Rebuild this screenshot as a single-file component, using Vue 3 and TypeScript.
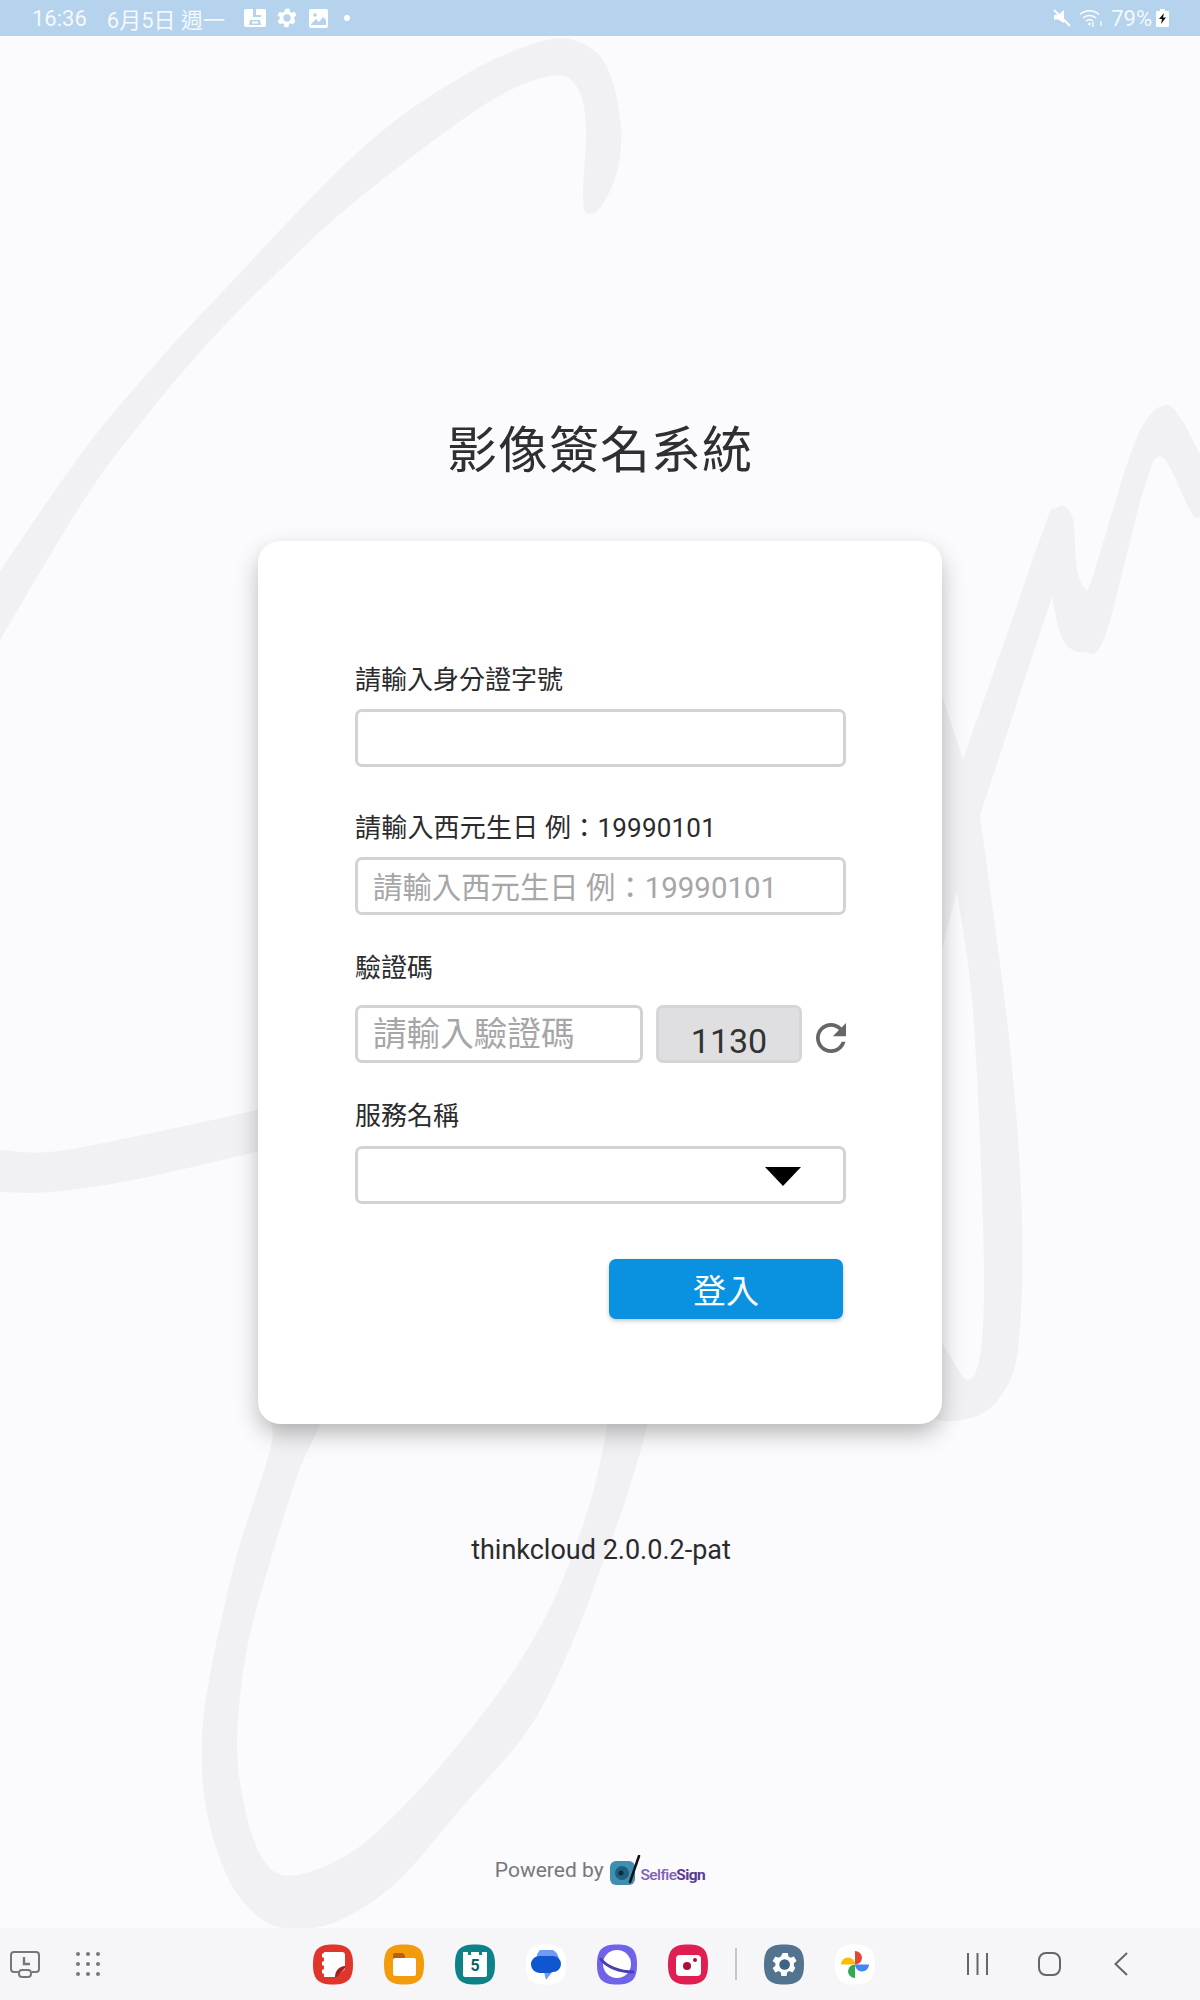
<template>
  <div class="screen">
    <!-- 背景簽名 -->
    <svg class="signature" viewBox="0 0 1200 2000" aria-hidden="true">
      <path v-for="(d, i) in signaturePaths" :key="i" :d="d" fill="#f1f0f2" />
    </svg>

    <header class="status-bar">
      <span class="status-time">16:36</span>
      <span class="status-date">6月5日 週一</span>
      <svg class="status-icon first" width="22" height="18" viewBox="0 0 22 18">
        <rect width="22" height="18" rx="2" fill="#fff" />
        <path fill="#b5d3ec" d="M9 0h3v6h5v2H9zM6 11h10l1 5H5z" />
        <rect x="8" y="12.500" width="6" height="2" fill="#fff" />
      </svg>
      <svg class="status-icon gear" width="20" height="20" viewBox="3 2.500 19 19">
        <path fill="#fff" d="M19.400 13a7.500 7.500 0 0 0 0-2l2.100-1.600-2-3.400-2.500 1a7.500 7.500 0 0 0-1.700-1L15 3.300h-4L9.700 6a7.500 7.500 0 0 0-1.700 1l-2.500-1-2 3.400L5.600 11a7.500 7.500 0 0 0 0 2l-2.100 1.600 2 3.400 2.500-1a7.500 7.500 0 0 0 1.700 1l.3 2.700h4l.3-2.700a7.500 7.500 0 0 0 1.700-1l2.500 1 2-3.400zM12.500 15.500a3.500 3.500 0 1 1 0-7 3.500 3.500 0 0 1 0 7z" />
      </svg>
      <svg class="status-icon" width="19" height="19" viewBox="0 0 19 19">
        <rect width="19" height="19" rx="2" fill="#fff" />
        <path fill="#b5d3ec" d="M2 15l5-5 3 3 4-5 3 3v5H2z" />
        <circle cx="6" cy="6" r="1.800" fill="#b5d3ec" />
      </svg>
      <span class="status-dot"></span>

      <div class="status-right">
        <svg width="18" height="20" viewBox="0 0 18 20">
          <path fill="#fff" d="M1 7h4l6-5v13l-6-3.500H1z" />
          <path stroke="#fff" stroke-width="2" d="M1 2l16 16" />
        </svg>
        <svg width="24" height="20" viewBox="0 0 24 20" fill="none" stroke="#fff" stroke-width="1.500">
          <path d="M1 6.500C6 1.500 15 1.500 20 6.500M4 10c3.500-3.500 9.500-3.500 13 0M7 13.300c2-2 5-2 7 0" />
          <path d="M14 14v5M22 13v5" stroke-width="1.200" />
          <circle cx="10.500" cy="16" r="1.300" fill="#fff" stroke="none" />
        </svg>
        <span class="status-battery-text">79%</span>
        <svg width="13" height="18" viewBox="0 0 13 18">
          <path fill="#fff" d="M4 0h5v2h3a1 1 0 0 1 1 1v14a1 1 0 0 1-1 1H1a1 1 0 0 1-1-1V3a1 1 0 0 1 1-1h3z" />
          <path fill="#111" d="M8 4L3 10h3l-1 5 5-6.500H7z" />
        </svg>
      </div>
    </header>

    <main class="content">
      <h1 class="title">影像簽名系統</h1>

      <form class="login-card" @submit.prevent>
        <div class="field">
          <label class="field-label">請輸入身分證字號</label>
          <input class="text-input" type="text" />
        </div>

        <div class="field field--birth">
          <label class="field-label">請輸入西元生日 例：19990101</label>
          <input class="text-input" type="text" placeholder="請輸入西元生日 例：19990101" />
        </div>

        <div class="field field--captcha">
          <label class="field-label">驗證碼</label>
          <div class="captcha-row">
            <input class="text-input captcha-input" type="text" placeholder="請輸入驗證碼" />
            <div class="captcha-code">{{ captcha }}</div>
            <svg class="refresh" viewBox="4 4 16 16" aria-hidden="true">
              <path fill="#666" d="M17.650 6.350C16.200 4.900 14.210 4 12 4c-4.420 0-7.990 3.580-7.990 8s3.570 8 7.990 8c3.730 0 6.840-2.550 7.730-6h-2.080c-.82 2.330-3.040 4-5.650 4-3.310 0-6-2.690-6-6s2.690-6 6-6c1.660 0 3.140.69 4.220 1.780L13 11h7V4l-2.350 2.350z" />
            </svg>
          </div>
        </div>

        <div class="field field--service">
          <label class="field-label">服務名稱</label>
          <div class="select-wrap">
            <select class="text-input select-input"></select>
            <span class="select-arrow"></span>
          </div>
        </div>

        <div class="actions">
          <button class="login-btn" type="submit">登入</button>
        </div>
      </form>

      <p class="version">thinkcloud 2.0.0.2-pat</p>

      <footer class="powered">
        <span class="powered-text">Powered by</span>
        <svg class="powered-logo" width="32" height="30" viewBox="0 0 32 30" aria-hidden="true">
          <rect x="1" y="6" width="25" height="24" rx="6" fill="#3f8fb0" />
          <circle cx="13" cy="18" r="7" fill="#1f5f80" />
          <circle cx="12" cy="18" r="2.500" fill="#0d2c40" />
          <path d="M30 1L21 27" stroke="#111" stroke-width="2.500" stroke-linecap="round" />
        </svg>
        <span class="powered-brand"><span class="brand-light">Selfie</span>Sign</span>
      </footer>
    </main>

    <nav class="nav-bar">
      <svg class="recents" width="30" height="27" viewBox="0 0 30 27" fill="none" stroke="#77777a" stroke-width="2">
        <path d="M8 21H4a3 3 0 0 1-3-3V4a3 3 0 0 1 3-3h22a3 3 0 0 1 3 3v14a3 3 0 0 1-3 3h-4" />
        <rect x="9" y="19" width="12" height="7" rx="3" />
        <path d="M14 6v7h6" stroke-width="2.400" />
      </svg>
      <svg class="apps-grid" width="24" height="24" viewBox="0 0 24 24" fill="#77777a">
        <template v-for="y in dotRows" :key="y">
          <circle v-for="x in dotRows" :key="x" :cx="x" :cy="y" r="2" />
        </template>
      </svg>

      <div class="dock">
        <svg class="app-icon" viewBox="0 0 40 41">
          <path fill="#e0352b" :d="squircle" />
          <path fill="#fff" d="M11 8h18a3 3 0 0 1 3 3v14l-9 8H11v-3l-2-1v-3l2-1v-3l-2-1v-3l2-1v-3l-2-1v-3l2-1z" />
          <path fill="#a3201b" d="M32 22v2l-8 9h-2c0-6 4-11 10-11z" />
        </svg>
        <svg class="app-icon" viewBox="0 0 40 41">
          <path fill="#f39c0b" :d="squircle" />
          <path fill="#b9600f" d="M9 11a2 2 0 0 1 2-2h8l2 3v4H9z" />
          <rect x="9" y="14" width="23" height="18" rx="2" fill="#fff" />
        </svg>
        <svg class="app-icon" viewBox="0 0 40 41">
          <path fill="#0e8289" :d="squircle" />
          <path fill="#fff" d="M8 8h5v3h3V8h8v3h3V8h5v23a2 2 0 0 1-2 2H10a2 2 0 0 1-2-2z" />
          <text x="20" y="27" text-anchor="middle" class="cal-day">5</text>
        </svg>
        <svg class="app-icon" viewBox="0 0 40 41">
          <path fill="#fff" :d="squircle" />
          <path fill="#6f9cf2" d="M14 6h13a11 11 0 0 1 3 17l-10 13-3-12A11 11 0 0 1 14 6z" />
          <path fill="#0f56d0" d="M13 12h14a8 8 0 0 1 0 16l-4 1H14a8.500 8.500 0 0 1-1-17z" />
        </svg>
        <svg class="app-icon" viewBox="0 0 40 41">
          <path fill="#6f63ea" :d="squircle" />
          <circle cx="20" cy="20" r="14" fill="#fff" />
          <path fill="none" stroke="#4a3fb0" stroke-width="3" d="M3 14c6 9 20 14 34 14" />
        </svg>
        <svg class="app-icon" viewBox="0 0 40 41">
          <path fill="#df1f52" :d="squircle" />
          <rect x="8" y="11" width="25" height="21" rx="4" fill="#fff" />
          <circle cx="19" cy="22" r="4" fill="#a8103c" />
          <circle cx="27" cy="16" r="2" fill="#a8103c" />
        </svg>
        <span class="dock-divider"></span>
        <svg class="app-icon" viewBox="0 0 40 41">
          <path fill="#527491" :d="squircle" />
          <g transform="translate(4 4.500) scale(1.330)">
            <path fill="#fff" d="M19.400 13a7.500 7.500 0 0 0 0-2l2.100-1.600-2-3.400-2.500 1a7.500 7.500 0 0 0-1.700-1L15 3.300h-4L9.700 6a7.500 7.500 0 0 0-1.700 1l-2.500-1-2 3.400L5.600 11a7.500 7.500 0 0 0 0 2l-2.100 1.600 2 3.400 2.500-1a7.500 7.500 0 0 0 1.700 1l.3 2.700h4l.3-2.700a7.500 7.500 0 0 0 1.700-1l2.500 1 2-3.400z" />
            <circle cx="12.500" cy="12" r="4" fill="#3d6485" />
          </g>
        </svg>
        <svg class="app-icon" viewBox="0 0 40 41">
          <path fill="#fff" :d="squircle" />
          <path fill="#ea4335" d="M20 20.500V7a7 7 0 0 1 7 7 7 7 0 0 1-7 6.500z" />
          <path fill="#4285f4" d="M20 20.500h14a7 7 0 0 1-7 7 7 7 0 0 1-7-7z" />
          <path fill="#34a853" d="M20 20.500V34a7 7 0 0 1-7-7 7 7 0 0 1 7-6.500z" />
          <path fill="#fbbc04" d="M20 20.500H6a7 7 0 0 1 7-7 7 7 0 0 1 7 7z" />
        </svg>
      </div>

      <div class="system-nav">
        <svg width="21" height="24" viewBox="0 0 21 24" stroke="#66666a" stroke-width="2">
          <path d="M1 1v22M10.500 1v22M20 1v22" />
        </svg>
        <svg width="23" height="24" viewBox="0 0 23 24" fill="none" stroke="#66666a" stroke-width="2">
          <rect x="1" y="1" width="21" height="22" rx="7" />
        </svg>
        <svg class="nav-back" width="14" height="24" viewBox="0 0 14 24" fill="none" stroke="#66666a" stroke-width="2">
          <path d="M13 1L1.500 12 13 23" />
        </svg>
      </div>
    </nav>
  </div>
</template>

<script setup lang="ts">
type Point = [number, number];

const captcha = '1130';
const dotRows: number[] = [2, 12, 22];
const squircle = 'M20 .5C35 .5 40 6 40 20.500S35 40.500 20 40.500 0 35 0 20.500 5 .5 20 .5z';

// 尖角：同一點重複三次，曲線在這裡就不會被磨圓
const corner = (x: number, y: number): Point[] => [[x, y], [x, y], [x, y]];

// 簽名筆畫的外框點，粗細不一所以用填色而不是 stroke
const signatureOutlines: Point[][] = [
  [
    [-60, 660], [0, 571], [84, 450], [147, 374], [210, 305], [358, 152], [463, 76], [547, 40], [589, 47], [610, 74],
    [621, 127], [617, 172], [602, 205], [589, 214], [583, 199], [586, 127], [577, 87], [551, 76],
    [484, 105], [358, 199], [280, 270], [210, 341], [147, 415], [84, 500], [0, 640], [-60, 740],
  ],
  [
    [-30, 1150], [0, 1150], [50, 1152], [133, 1137], [257, 1110], [300, 1100], [300, 1145], [257, 1152],
    [133, 1180], [50, 1192], [0, 1192], [-30, 1192],
  ],
  [
    [930, 670], [942, 696], ...corner(963, 759), [1005, 640], [1047, 520], [1055, 509], [1064, 506], [1073, 520],
    [1077, 569], [1085, 588], [1093, 576], [1127, 464], [1147, 419], [1167, 405], [1183, 422], [1200, 454],
    [1230, 500], [1200, 517], [1190, 510], [1162, 457], [1143, 492], [1105, 636], [1083, 652], [1063, 640],
    ...corner(1052, 597), ...corner(980, 815), [1010, 1046], [1022, 1222], [1018, 1348], [1000, 1397], [970, 1418],
    [930, 1412], [925, 1330], [943, 1345], [968, 1380], [982, 1341], [983, 1222], [973, 1011],
    ...corner(957, 892), [930, 960],
  ],
  [
    [265, 1400], [272, 1441], [237, 1555], [210, 1675], [202, 1744], [207, 1813], [230, 1882], [263, 1920],
    [297, 1929], [340, 1920], [397, 1882], [463, 1806], [530, 1727], [573, 1641], [603, 1562], [630, 1486],
    [650, 1400], [610, 1400], [607, 1428], [590, 1503], [557, 1593], [513, 1672], [453, 1751], [393, 1817],
    [347, 1855], [297, 1875], [267, 1865], [247, 1817], [237, 1744], [247, 1648], [270, 1562], [297, 1476],
    [325, 1400],
  ],
];

// Catmull-Rom -> bezier，讓外框點連成平滑曲線
function smoothClosedPath(points: Point[]): string {
  const n = points.length;
  let d = `M${points[0][0]} ${points[0][1]}`;
  for (let i = 0; i < n; i++) {
    const p0 = points[(i - 1 + n) % n];
    const p1 = points[i];
    const p2 = points[(i + 1) % n];
    const p3 = points[(i + 2) % n];
    const c1x = p1[0] + (p2[0] - p0[0]) / 6;
    const c1y = p1[1] + (p2[1] - p0[1]) / 6;
    const c2x = p2[0] - (p3[0] - p1[0]) / 6;
    const c2y = p2[1] - (p3[1] - p1[1]) / 6;
    d += `C${c1x.toFixed(1)} ${c1y.toFixed(1)} ${c2x.toFixed(1)} ${c2y.toFixed(1)} ${p2[0]} ${p2[1]}`;
  }
  return d + 'Z';
}

const signaturePaths = signatureOutlines.map(smoothClosedPath);
</script>

<style>
html,
body {
  margin: 0;
  background: #fbfafc;
}
</style>

<style scoped>
.screen {
  position: relative;
  width: 1200px;
  height: 2000px;
  overflow: hidden;
  display: flex;
  flex-direction: column;
  background: #fbfafc;
  color: #2b2b2d;
  font-family: Roboto, "Noto Sans CJK TC", sans-serif;
}

.signature {
  position: absolute;
  left: 0;
  top: 0;
  width: 1200px;
  height: 2000px;
}

/* 狀態列 */
.status-bar {
  position: relative;
  height: 36px;
  flex: none;
  display: flex;
  align-items: center;
  padding: 0 31px 0 32px;
  background: #b5d3ec;
  color: rgba(255, 255, 255, 0.88);
  font-size: 22px;
}

.status-date {
  margin-left: 20px;
  font-size: 22px;
}

.status-icon {
  margin-left: 12px;
}

.status-icon.first {
  margin-left: 19px;
}

.status-icon.gear {
  margin-left: 11px;
}

.status-dot {
  width: 6px;
  height: 6px;
  margin-left: 16px;
  border-radius: 50%;
  background: #fff;
}

.status-right {
  margin-left: auto;
  display: flex;
  align-items: center;
  gap: 8px;
}

.status-battery-text {
  margin-right: -4px;
}

/* 內容 */
.content {
  position: relative;
  flex: 1;
  display: flex;
  flex-direction: column;
  align-items: center;
}

.title {
  margin: 385px 0 60px;
  font-size: 50px;
  line-height: 60px;
  font-weight: 400;
  letter-spacing: 1px;
  color: #2f2f31;
}

.login-card {
  box-sizing: border-box;
  width: 684px;
  height: 883px;
  padding: 122px 96px 0 97px;
  background: #fff;
  border-radius: 22px;
  box-shadow: 0 10px 24px -2px rgba(0, 0, 0, 0.3);
}

.field-label {
  display: block;
  height: 34px;
  margin-bottom: 12px;
  font-size: 26px;
  line-height: 34px;
  color: #2b2b2d;
}

.field--birth {
  margin-top: 44px;
}

.field--birth .field-label {
  letter-spacing: 0.2px;
}

.field--birth .text-input {
  padding-top: 3px;
  font-size: 29.400px;
}

.field--captcha {
  margin-top: 36px;
}

.field--captcha .field-label {
  margin-bottom: 20px;
}

.field--service {
  margin-top: 36px;
}

.field--service .field-label {
  margin-bottom: 13px;
}

.text-input {
  display: block;
  box-sizing: border-box;
  width: 100%;
  height: 58px;
  padding: 0 15px;
  border: 3px solid #d3d3d5;
  border-radius: 7px;
  outline: none;
  background: #fff;
  font-family: inherit;
  font-size: 30px;
  color: #333;
}

.text-input::placeholder {
  color: #a6a6a8;
  opacity: 1;
}

.captcha-row {
  display: flex;
  align-items: center;
}

.captcha-input {
  width: 288px;
  flex: none;
  font-size: 33.600px;
}

.captcha-code {
  box-sizing: border-box;
  width: 146px;
  height: 58px;
  margin-left: 13px;
  padding-top: 11px;
  border: 3px solid #d6d6d8;
  border-radius: 7px;
  background: #dfdfe1;
  text-align: center;
  font-size: 34px;
  line-height: 44px;
  color: #333;
}

.refresh {
  width: 30px;
  height: 30px;
  margin: 8px 0 0 14px;
}

.select-wrap {
  position: relative;
}

.select-input {
  appearance: none;
}

.select-arrow {
  position: absolute;
  right: 45px;
  top: 21px;
  width: 0;
  height: 0;
  border-left: 18.500px solid transparent;
  border-right: 18.500px solid transparent;
  border-top: 19px solid #000;
}

.actions {
  display: flex;
  justify-content: flex-end;
  margin-top: 55px;
  padding-right: 3px;
}

.login-btn {
  width: 234px;
  height: 60px;
  border: none;
  border-radius: 7px;
  background: #0a91e0;
  box-shadow: 0 2px 4px rgba(0, 0, 0, 0.22);
  color: #fff;
  font-family: inherit;
  font-size: 33px;
  font-weight: 400;
}

.version {
  margin: 108px 0 0;
  padding-left: 2px;
  font-size: 27px;
  line-height: 36px;
  color: #2b2b2d;
}

.powered {
  display: flex;
  align-items: center;
  margin-top: auto;
  padding-bottom: 43px;
  height: 30px;
}

.powered-text {
  font-size: 21px;
  color: #77777a;
}

.powered-logo {
  margin-left: 5px;
}

.powered-brand {
  margin: 10px 0 0 0;
  font-size: 15.500px;
  font-weight: 700;
  letter-spacing: -0.6px;
  color: #5b3a96;
}

.brand-light {
  font-weight: 500;
  color: #7d5fb5;
}

/* 導覽列 */
.nav-bar {
  position: relative;
  height: 72px;
  flex: none;
  display: flex;
  align-items: center;
  padding-left: 10px;
  background: #f6f6f8;
}

.apps-grid {
  margin-left: 36px;
}

.dock {
  display: flex;
  align-items: center;
  gap: 31px;
  margin-left: 213px;
}

.app-icon {
  display: block;
  width: 40px;
  height: 41px;
}

.cal-day {
  font-family: Roboto, sans-serif;
  font-size: 16px;
  font-weight: 700;
  fill: #0e5f66;
}

.dock-divider {
  width: 2px;
  height: 32px;
  margin: 0 -4px;
  background: #c6c6c9;
}

.system-nav {
  display: flex;
  align-items: center;
  margin-left: 92px;
  gap: 50px;
}

.nav-back {
  margin-left: 3px;
}
</style>
